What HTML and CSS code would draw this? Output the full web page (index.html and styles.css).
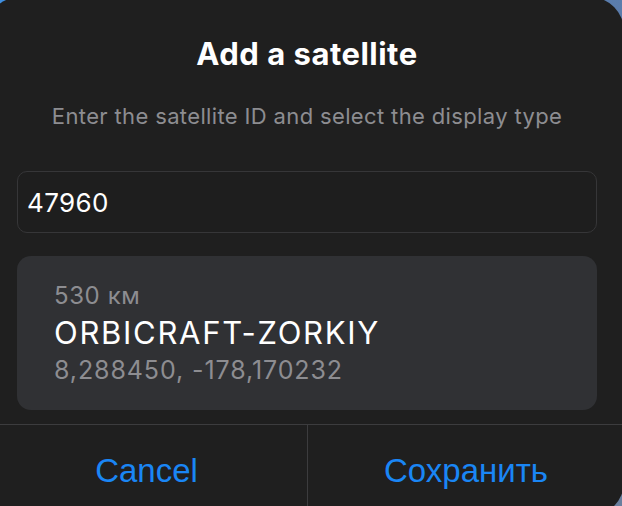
FILE: index.html
```html
<!DOCTYPE html>
<html lang="en">
<head>
<meta charset="utf-8">
<title>Add a satellite</title>
<link rel="stylesheet" href="styles.css">
</head>
<body>
<div class="dialog">
  <div class="content">
    <h1 class="title">Add a satellite</h1>
    <p class="subtitle">Enter the satellite ID and select the display type</p>
    <div class="field">47960</div>
    <div class="card">
      <div class="alt">530 км</div>
      <div class="name">ORBICRAFT-ZORKIY</div>
      <div class="coords">8,288450, -178,170232</div>
    </div>
  </div>
  <div class="actions">
    <div class="btn">Cancel</div>
    <div class="btn">Сохранить</div>
  </div>
</div>
</body>
</html>
```
FILE: styles.css
```css
html, body {
  margin: 0;
  padding: 0;
  width: 622px;
  height: 506px;
  overflow: hidden;
  background: linear-gradient(135deg, #3f8fe0 0%, #5d7ba8 60%, #6a7f9e 100%);
}

.dialog {
  box-sizing: border-box;
  width: 638px;
  height: 519px;
  margin: -3px 0 0 -14px;
  background: #1f1f1f;
  border-radius: 34px;
  display: flex;
  flex-direction: column;
  font-family: Inter, "Noto Sans", sans-serif;
  color: #ffffff;
}

.content {
  padding: 39px 27px 0 31px;
  display: flex;
  flex-direction: column;
}

.title {
  margin: 0;
  font-size: 31px;
  line-height: 36px;
  font-weight: 700;
  text-align: center;
  letter-spacing: 0.5px;
}

.subtitle {
  margin: 30px 0 0;
  font-size: 22px;
  line-height: 28px;
  font-weight: 400;
  color: #8d8d91;
  text-align: center;
  letter-spacing: 0.36px;
}

.field {
  box-sizing: border-box;
  margin-top: 41px;
  height: 62px;
  border: 1px solid #363638;
  border-radius: 10px;
  background: #1e1e1e;
  display: flex;
  align-items: center;
  padding-left: 9px;
  font-size: 26px;
  letter-spacing: 0.4px;
  color: #ffffff;
}

.card {
  box-sizing: border-box;
  margin-top: 23px;
  height: 154px;
  border-radius: 14px;
  background: #303134;
  padding: 25px 0 0 37px;
  display: flex;
  flex-direction: column;
}

.alt {
  font-size: 24px;
  line-height: 30px;
  letter-spacing: 0.6px;
  color: #8d8d91;
}

.name {
  font-size: 31px;
  line-height: 44px;
  letter-spacing: 1.7px;
  color: #ffffff;
}

.coords {
  font-size: 25px;
  line-height: 30px;
  letter-spacing: 0.9px;
  color: #8d8d91;
}

.actions {
  margin-top: auto;
  height: 91px;
  border-top: 1px solid #3c3c3e;
  display: grid;
  grid-template-columns: 321px 1fr;
}

.btn {
  display: flex;
  align-items: center;
  justify-content: center;
  font-family: "Liberation Sans", Arial, sans-serif;
  font-size: 33px;
  color: #1a86f5;
}

.btn + .btn {
  border-left: 1px solid #3c3c3e;
}
```
